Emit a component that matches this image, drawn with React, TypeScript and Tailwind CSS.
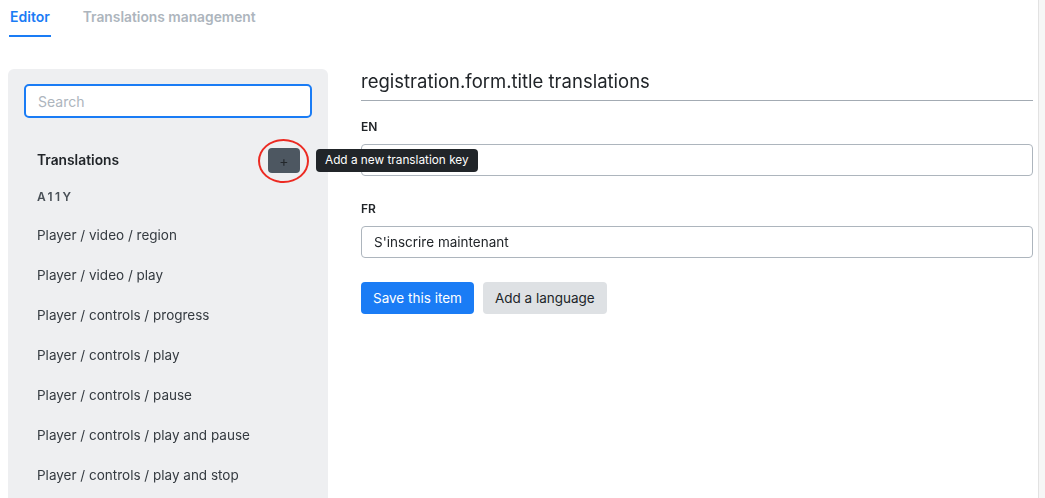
import { useState } from "react";

const keys = [
  "Player / video / region",
  "Player / video / play",
  "Player / controls / progress",
  "Player / controls / play",
  "Player / controls / pause",
  "Player / controls / play and pause",
  "Player / controls / play and stop",
];

export default function App() {
  const [fr, setFr] = useState("S'inscrire maintenant");

  return (
    <div
      className="flex h-[498px] w-full overflow-hidden bg-white text-[#212529]"
      style={{ fontFamily: "Inter, 'Noto Sans', sans-serif" }}
    >
      <div className="flex min-w-0 flex-1 flex-col">
        {/* Tabs */}
        <div className="flex gap-[32px] pl-[9px]">
          <button className="border-b-2 border-[#1a7cf5] px-px pb-2 pt-[7px] text-sm font-semibold leading-5 text-[#1a7cf5]">
            Editor
          </button>
          <button className="border-b-2 border-transparent pb-2 pt-[7px] text-[13.8px] font-semibold leading-5 text-[#adb5bd]">
            Translations management
          </button>
        </div>

        <div className="mt-8 flex flex-1">
          {/* Sidebar */}
          <aside className="ml-2 w-[320px] shrink-0 rounded-t-md bg-[#eeeff1] px-4 pt-[15px]">
            <input
              autoFocus
              placeholder="Search"
              className="h-[34px] w-full rounded-[5px] border-2 border-[#1a7cf5] bg-white px-3 text-[14px] text-[#212529] outline-none placeholder:text-[#adb5bd]"
            />

            <div className="relative mt-[30px] flex h-[25px] items-center justify-between pl-[13px] pr-3">
              <span className="text-[13.8px] font-semibold text-[#212529]">Translations</span>
              <button className="flex h-[25px] w-8 items-center justify-center rounded bg-[#4d5761] text-sm leading-none text-[#22272b]">
                +
              </button>
              {/* annotation ring */}
              <span className="pointer-events-none absolute right-[3px] top-[-9px] h-[44px] w-[51px] rounded-[50%] border-[2.5px] border-[#ec2a22]" />
              {/* tooltip */}
              <span className="absolute left-[292px] top-[1px] whitespace-nowrap rounded bg-[#212529] px-[9px] py-[3px] text-[11.8px] leading-[17px] text-white">
                Add a new translation key
              </span>
            </div>

            <div className="mt-4 pl-[13px] text-xs font-semibold leading-4 tracking-[0.2em] text-[#495057]">
              A11Y
            </div>

            <ul className="mt-2.5 pl-[13px]">
              {keys.map((k) => (
                <li key={k} className="py-2.5 text-[13.5px] leading-5 text-[#343a40]">
                  {k}
                </li>
              ))}
            </ul>
          </aside>

          {/* Editor */}
          <main className="ml-[33px] mr-[5px] min-w-0 flex-1">
            <h2 className="border-b border-[#a3abb3] pb-[7px] text-[18.5px] leading-6 font-normal text-[#212529]">
              registration.form.title translations
            </h2>

            <label className="mt-[18px] block text-xs font-semibold leading-4 text-[#212529]">EN</label>
            <input className="mt-[9px] h-8 w-full rounded border border-[#adb5bd] px-3 text-sm outline-none" />

            <label className="mt-[25px] block text-xs font-semibold leading-4 text-[#212529]">FR</label>
            <input
              value={fr}
              onChange={(e) => setFr(e.target.value)}
              className="mt-[9px] h-8 w-full rounded border border-[#adb5bd] px-3 text-[13.5px] text-[#212529] outline-none"
            />

            <div className="mt-6 flex gap-[9px]">
              <button className="h-8 rounded bg-[#1a7cf5] px-3 text-[13.5px] text-white">Save this item</button>
              <button className="h-8 rounded bg-[#dee1e4] px-3 text-[13.5px] text-[#212529]">Add a language</button>
            </div>
          </main>
        </div>
      </div>

      {/* scrollbar track */}
      <div className="w-[7px] shrink-0 border-l border-[#e2e2e2] bg-[#f6f6f6]" />
    </div>
  );
}
